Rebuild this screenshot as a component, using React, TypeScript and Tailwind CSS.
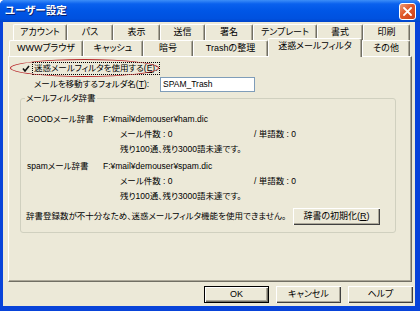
import React from 'react';

const FONT = "font-['Liberation_Sans','Noto_Sans_CJK_JP',sans-serif] [font-feature-settings:'palt']";

const ROW1 = [
  { label: 'アカウント', w: 'w-[54px]' },
  { label: 'パス', w: 'w-[46px]' },
  { label: '表示', w: 'w-[47px]' },
  { label: '送信', w: 'w-[45px]' },
  { label: '署名', w: 'w-[48px]' },
  { label: 'テンプレート', w: 'w-[64px]' },
  { label: '書式', w: 'w-[46px]' },
  { label: '印刷', w: 'w-[47px]' },
];

const ROW2 = [
  { label: 'WWWブラウザ', w: 'w-[74px]' },
  { label: 'キャッシュ', w: 'w-[60px]' },
  { label: '暗号', w: 'w-[50px]' },
  { label: 'Trashの整理', w: 'w-[75px]' },
  { label: '迷惑メールフィルタ', w: 'w-[94px]', active: true },
  { label: 'その他', w: 'w-[48px]' },
];

function Tab({ label, w, active }: { label: string; w: string; active?: boolean }) {
  if (active) {
    return (
      <div
        className={`${w} relative z-10 -mt-[2px] h-[19px] flex items-center justify-center pb-[3px] bg-[#ece9d8] border-t border-l border-white border-r border-r-[#716f64] rounded-t-[2px] shadow-[inset_-1px_0_0_#aca899] text-[9px] text-black whitespace-nowrap`}
      >
        {label}
      </div>
    );
  }
  return (
    <div
      className={`${w} h-[16px] flex items-center justify-center bg-[#ece9d8] border-t border-l border-white border-r border-r-[#716f64] rounded-t-[2px] shadow-[inset_-1px_0_0_#aca899] text-[9px] text-black whitespace-nowrap`}
    >
      {label}
    </div>
  );
}

function Button({ children, def, w }: { children: React.ReactNode; def?: boolean; w: string }) {
  return (
    <div
      className={`${w} h-[17px] flex items-center justify-center text-[9px] text-black bg-[#ece9d8] whitespace-nowrap ${
        def
          ? 'border border-black shadow-[inset_1px_1px_0_#fff,inset_-1px_-1px_0_#716f64,inset_-2px_-2px_0_#aca899]'
          : 'shadow-[inset_1px_1px_0_#fff,inset_-1px_-1px_0_#404040,inset_-2px_-2px_0_#aca899]'
      }`}
    >
      {children}
    </div>
  );
}

export default function App() {
  return (
    <div className={`w-[420px] h-[311px] flex flex-col bg-[#0843d9] overflow-hidden rounded-t-[5px] ${FONT}`}>
      {/* title bar */}
      <div className="h-[22px] shrink-0 flex items-center justify-between pl-[5px] pr-[4px] bg-[linear-gradient(180deg,#3d8ef8_0%,#0a61ee_18%,#0056e6_50%,#0051df_85%,#0044c9_100%)]">
        <span className="text-white font-bold text-[10.5px] [text-shadow:1px_1px_0_#0a1f6e]">ユーザー設定</span>
        <div className="w-[17px] h-[17px] rounded-[3px] border border-white bg-[linear-gradient(135deg,#ee9b77_0%,#e0592a_45%,#c8401a_100%)] flex items-center justify-center">
          <svg width="9" height="9" viewBox="0 0 9 9">
            <path d="M1 1 L8 8 M8 1 L1 8" stroke="#fff" strokeWidth="1.8" strokeLinecap="square" />
          </svg>
        </div>
      </div>

      {/* body */}
      <div className="flex-1 ml-[3px] mr-[5px] mb-[5px] bg-[#ece9d8] flex flex-col pt-[2px]">
        <div className="ml-[5px] mr-[3px] flex flex-col">
          <div className="flex pl-[5px] h-[16px]">
            {ROW1.map((t) => (
              <Tab key={t.label} {...t} />
            ))}
          </div>
          <div className="flex items-start pl-[1px] h-[16px]">
            {ROW2.map((t) => (
              <Tab key={t.label} {...t} />
            ))}
          </div>

          {/* panel */}
          <div className="relative h-[226px] border-t border-l border-white border-r border-b border-r-[#716f64] border-b-[#716f64] shadow-[inset_-1px_-1px_0_#aca899] flex flex-col text-[8.5px] text-black whitespace-nowrap">
            {/* annotation ellipse */}
            <div className="absolute left-[1px] top-[2px] w-[149px] h-[18px] rounded-[50%] border-[1.5px] border-[#b8262a]" />

            <div className="mt-[5px] h-[13px] flex items-center pl-[12px]">
              <svg width="10" height="10" viewBox="0 0 10 10" className="shrink-0">
                <path d="M2 4.5 L4 7 L8 2" stroke="#111" strokeWidth="1.6" fill="none" />
              </svg>
              <span className="ml-[1px] px-[1px] h-[13px] leading-[11px] border border-dotted border-black">
                迷惑メールフィルタを使用する(<span className="underline">E</span>):
              </span>
            </div>

            <div className="mt-[2px] h-[15px] flex items-center pl-[25px]">
              <span className="w-[126px]">
                メールを移動するフォルダ名(<span className="underline">T</span>):
              </span>
              <div className="w-[95px] h-[15px] bg-white border border-[#7f9db9] pl-[2px] leading-[13px]">SPAM_Trash</div>
            </div>

            {/* group box */}
            <div className="mt-[6px] ml-[11px] w-[376px] h-[135px] border border-[#d0d0bf] rounded-[3px] flex flex-col">
              <span className="-mt-[6px] ml-[4px] px-[1px] w-fit h-[11px] leading-[11px] bg-[#ece9d8]">メールフィルタ辞書</span>

              <div className="mt-[8px] h-[15px] leading-[15px] flex pl-[6px]">
                <span className="w-[76px]">GOODメール辞書</span>
                <span>F:¥mail¥demouser¥ham.dic</span>
              </div>
              <div className="h-[15px] leading-[15px] flex pl-[99px]">
                <span className="w-[134px]">メール件数 : 0</span>
                <span>/ 単語数 : 0</span>
              </div>
              <div className="h-[15px] leading-[15px] pl-[99px]">残り100通、残り3000語未達です。</div>

              <div className="mt-[2px] h-[15px] leading-[15px] flex pl-[6px]">
                <span className="w-[76px]">spamメール辞書</span>
                <span>F:¥mail¥demouser¥spam.dic</span>
              </div>
              <div className="h-[15px] leading-[15px] flex pl-[99px]">
                <span className="w-[134px]">メール件数 : 0</span>
                <span>/ 単語数 : 0</span>
              </div>
              <div className="h-[15px] leading-[15px] pl-[99px]">残り100通、残り3000語未達です。</div>

              <div className="mt-[4px] h-[17px] flex items-center pl-[5px] pr-[15px]">
                <span>辞書登録数が不十分なため、迷惑メールフィルタ機能を使用できません。</span>
                <div className="ml-auto">
                  <Button w="w-[87px]">
                    辞書の初期化(<span className="underline">R</span>)
                  </Button>
                </div>
              </div>
            </div>
          </div>
        </div>

        {/* dialog buttons */}
        <div className="mt-[4px] flex justify-end gap-[7px] pr-[2px]">
          <Button w="w-[65px]" def>
            OK
          </Button>
          <Button w="w-[65px]">キャンセル</Button>
          <Button w="w-[65px]">ヘルプ</Button>
        </div>
      </div>
    </div>
  );
}
